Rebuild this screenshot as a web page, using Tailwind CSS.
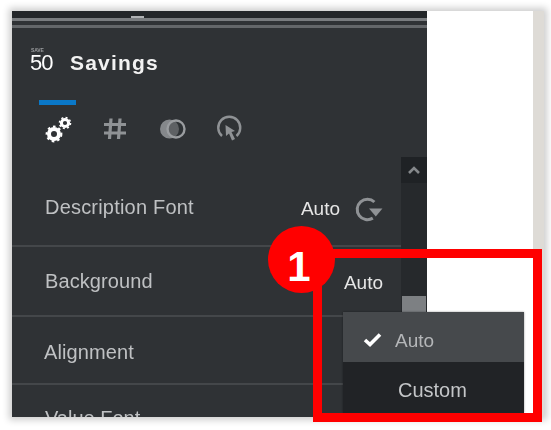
<!DOCTYPE html>
<html>
<head>
<meta charset="utf-8">
<script src="https://cdn.jsdelivr.net/npm/@tailwindcss/browser@4"></script>
</head>
<body class="bg-white">
<div class="relative w-[551px] h-[430px] bg-white overflow-hidden font-['Liberation_Sans',Arial,sans-serif]">
  <div class="absolute left-[12px] top-[11px] w-[532px] h-[406px] flex shadow-[0_0_7px_3px_rgba(0,0,0,0.2)] bg-white">
    <div class="w-[415px] h-full bg-[#2f3235] flex flex-col overflow-hidden blur-[0.7px]">
      <div class="h-[7px] bg-[#24272a] relative shrink-0">
        <div class="absolute left-[119px] top-[5px] w-[13px] h-[2px] bg-[#b0b2b4]"></div>
      </div>
      <div class="h-[3px] bg-[#7a7d80] shrink-0"></div>
      <div class="h-[4px] bg-[#303336] shrink-0"></div>
      <div class="h-[3px] bg-[#64676a] shrink-0"></div>

      <div class="flex flex-1 min-h-0">
        <div class="flex-1 min-w-0 flex flex-col">
          <div class="flex items-center h-[40px] mt-[14px] pl-[18px] shrink-0">
            <div class="w-[25px] flex flex-col items-start leading-none -mt-[5px]">
              <span class="text-[5px] font-bold text-[#9a9c9e] leading-[6px] tracking-tight pl-[1px]">SAVE</span>
              <span class="text-[22px] text-white leading-[20px] tracking-[-1px]">50</span>
            </div>
            <span class="ml-[15px] text-[21px] font-bold text-[#f2f2f2] tracking-[1.2px] leading-none">Savings</span>
          </div>

          <div class="relative h-[52px] shrink-0 mt-[18px] flex items-center pl-[32px]">
            <div class="absolute left-[27px] top-0 w-[37px] h-[5px] bg-[#0a78c8]"></div>
            <svg class="mt-[5px]" width="30" height="30" viewBox="0 0 30 30">
              <circle cx="10" cy="20" r="5" fill="none" stroke="#fff" stroke-width="4"/>
              <circle cx="10" cy="20" r="7.4" fill="none" stroke="#fff" stroke-width="2" stroke-dasharray="2.6 3"/>
              <circle cx="21" cy="9" r="3.6" fill="none" stroke="#fff" stroke-width="3"/>
              <circle cx="21" cy="9" r="5.5" fill="none" stroke="#fff" stroke-width="1.6" stroke-dasharray="2 2.3"/>
            </svg>
            <svg class="mt-[5px] ml-[28px]" width="26" height="26" viewBox="0 0 26 26">
              <path d="M9 2.500 L7.500 23 M18 2.500 L16.500 23 M2 8.500 H24 M2 17 H24" stroke="#8f9295" stroke-width="3.200" fill="none"/>
            </svg>
            <svg class="mt-[5px] ml-[31px]" width="28" height="26" viewBox="0 0 28 26">
              <circle cx="10.500" cy="13" r="8.500" fill="#85888b" stroke="#85888b" stroke-width="2"/>
              <circle cx="17" cy="13" r="8.500" fill="#2f3235" fill-opacity="0.45" stroke="#9a9da0" stroke-width="2.400"/>
            </svg>
            <svg class="mt-[5px] ml-[28px]" width="28" height="28" viewBox="0 0 28 28">
              <path d="M7 21 A11 11 0 1 1 21.500 21" fill="none" stroke="#8f9295" stroke-width="2.400"/>
              <path d="M10.500 10 L20 16 L16.500 17 L20 24 L17 25.500 L14 18.500 L11 21 Z" fill="#8f9295"/>
            </svg>
          </div>

          <div class="mt-[22px] flex flex-col text-[20px] text-[#bfc1c3]">
            <div class="h-[73px] flex items-center justify-between pl-[33px] pr-[18px] border-b-[2px] border-[#44474a] shrink-0">
              <span class="-mt-[6px] tracking-[0.2px]">Description Font</span>
              <div class="flex items-center gap-[14px] -mt-[1px]">
                <span class="text-[#e6e6e6] text-[19px]">Auto</span>
                <svg width="29" height="26" viewBox="0 0 27 24">
                  <path d="M19 5.500 A9.500 9.500 0 1 0 17.500 20.500" fill="none" stroke="#8f9295" stroke-width="2.800"/>
                  <path d="M14 11.500 H26.500 L20.300 19 Z" fill="#8f9295"/>
                </svg>
              </div>
            </div>
            <div class="h-[70px] flex items-center justify-between pl-[33px] pr-[18px] border-b-[2px] border-[#44474a] shrink-0">
              <span class="tracking-[0.1px]">Background</span>
              <span class="text-[#e6e6e6] text-[19px] pt-[4px]">Auto</span>
            </div>
            <div class="h-[68px] flex items-center pl-[32px] border-b-[2px] border-[#44474a] shrink-0">
              <span class="pt-[4px] tracking-[0.1px]">Alignment</span>
            </div>
            <div class="h-[40px] flex items-start pl-[33px] pt-[23px] shrink-0">
              <span class="leading-none">Value Font</span>
            </div>
          </div>
        </div>

        <div class="w-[26px] h-full bg-[#26292c] flex flex-col shrink-0 mt-[129px]">
          <div class="h-[26px] bg-[#1f2225] flex items-center justify-center shrink-0">
            <svg width="14" height="9" viewBox="0 0 14 9"><path d="M2 7 L7 2 L12 7" fill="none" stroke="#85888b" stroke-width="2.600"/></svg>
          </div>
          <div class="h-[113px] shrink-0"></div>
          <div class="h-[16px] bg-[#7d8083] mx-[1px] shrink-0"></div>
        </div>
      </div>
    </div>
    <div class="flex-1 bg-white"></div>
    <div class="w-[11px] h-full bg-[#dedbd6]"></div>
  </div>

  <!-- dropdown menu -->
  <div class="absolute left-[343px] top-[312px] w-[181px] h-[101px] flex flex-col text-[19px] blur-[0.7px] shadow-[0_0_2px_rgba(0,0,0,0.4)]">
    <div class="h-[50px] bg-[#46494c] flex items-center pl-[20px] pt-[9px] text-[#b4b6b8] shrink-0">
      <svg class="-mt-[5px]" width="19" height="15" viewBox="0 0 19 15"><path d="M2 8 L7 12.500 L17 2.500" fill="none" stroke="#fff" stroke-width="3.600"/></svg>
      <span class="ml-[13px]">Auto</span>
    </div>
    <div class="flex-1 bg-[#212326] flex items-center pl-[55px] pt-[4px] text-[#c4c6c8] text-[20px]">
      <span>Custom</span>
    </div>
  </div>

  <!-- callout -->
  <div class="absolute left-[313px] top-[249px] w-[229px] h-[173px] border-[9px] border-[#ff0000]"></div>
  <div class="absolute left-[268px] top-[226px] w-[67px] h-[67px] rounded-full bg-[#ff0000] flex items-center justify-center pt-[15px] pr-[5px] text-white text-[42px] font-bold leading-none">1</div>
</div>
</body>
</html>
